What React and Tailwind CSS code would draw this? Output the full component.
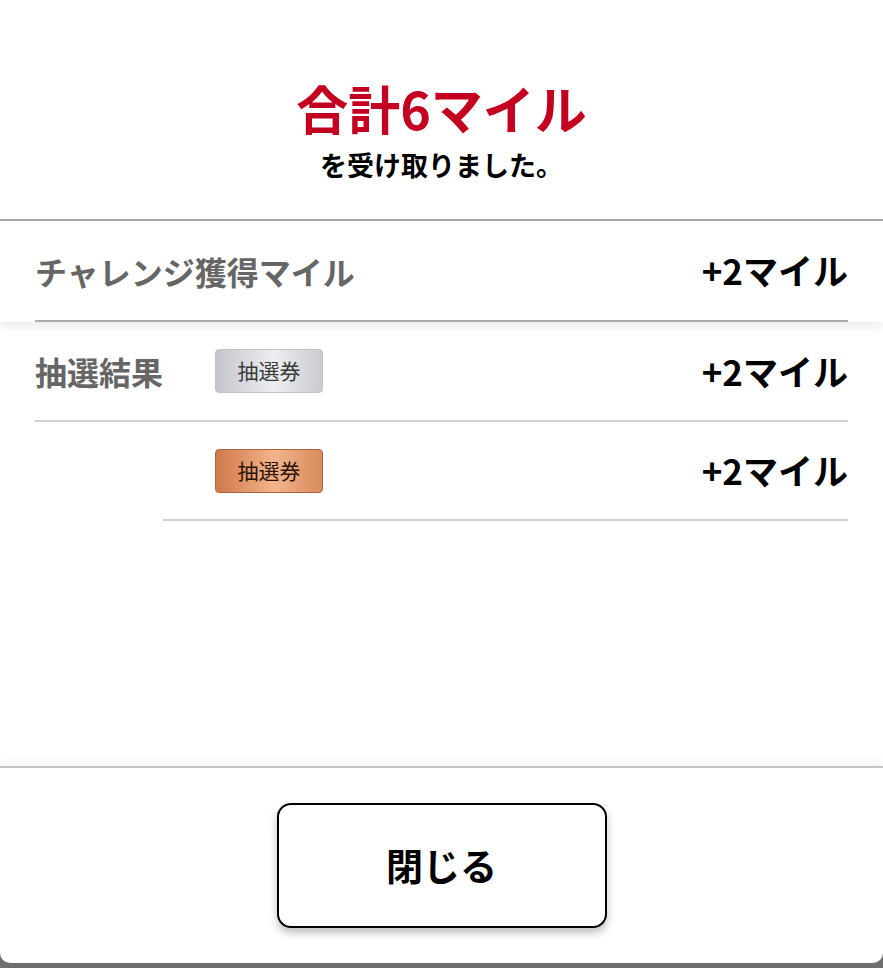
import React from 'react';

const font = { fontFamily: '"Noto Sans CJK JP", "Noto Sans", sans-serif' };

function Ticket({ kind }) {
    const styles = kind === 'bronze'
        ? 'bg-[linear-gradient(90deg,#d0784a_0%,#f2b48c_55%,#d98a5c_100%)] border-[#a8653e] text-[#2a1206]'
        : 'bg-[linear-gradient(90deg,#c4c6cc_0%,#eceef1_55%,#c9cbd1_100%)] border-[#c0c2c8] text-[#3a3a3a]';
    return (
        <div className={`w-[108px] h-[44px] rounded-[4px] border flex items-center justify-center text-[21px] ${styles}`}>
            抽選券
        </div>
    );
}

export default function App() {
    return (
        <div className="min-h-screen bg-[#6e6e6e]" style={font}>
            <div className="h-[963px] bg-white rounded-b-[10px] flex flex-col overflow-hidden">
                {/* header */}
                <div className="h-[221px] shrink-0 flex flex-col items-center pt-[76px] border-b-2 border-[#a9a9a9]">
                    <div className="text-[52px] leading-[64px] font-bold text-[#c3001f]">合計6マイル</div>
                    <div className="text-[27px] leading-[34px] font-bold text-black mt-[8px]">を受け取りました。</div>
                </div>

                {/* challenge row */}
                <div className="relative z-10 h-[101px] shrink-0 px-[35px] bg-white shadow-[0_5px_10px_rgba(0,0,0,0.08)]">
                    <div className="h-full flex items-center justify-between border-b-2 border-[#acacac]">
                        <span className="text-[32px] font-bold text-[#666666]">チャレンジ獲得マイル</span>
                        <span className="text-[35px] font-bold text-black">+2マイル</span>
                    </div>
                </div>

                {/* lottery rows */}
                <div className="pl-[35px] pr-[35px]">
                    <div className="h-[100px] flex items-center border-b-2 border-[#d0d0d0]">
                        <span className="w-[180px] text-[32px] font-bold text-[#666666]">抽選結果</span>
                        <Ticket kind="silver" />
                        <span className="ml-auto text-[35px] font-bold text-black">+2マイル</span>
                    </div>
                    <div className="ml-[128px] h-[99px] flex items-center border-b-2 border-[#d0d0d0]">
                        <div className="ml-[52px]">
                            <Ticket kind="bronze" />
                        </div>
                        <span className="ml-auto text-[35px] font-bold text-black">+2マイル</span>
                    </div>
                </div>

                <div className="flex-1" />

                {/* footer */}
                <div className="h-[197px] shrink-0 border-t-2 border-[#c6c6c6] shadow-[0_-6px_10px_rgba(0,0,0,0.04)] flex justify-center pt-[35px]">
                    <button className="w-[330px] h-[125px] rounded-[14px] border-2 border-black bg-white shadow-[0_5px_8px_rgba(0,0,0,0.25)] text-[37px] font-bold text-black">
                        閉じる
                    </button>
                </div>
            </div>
        </div>
    );
}
